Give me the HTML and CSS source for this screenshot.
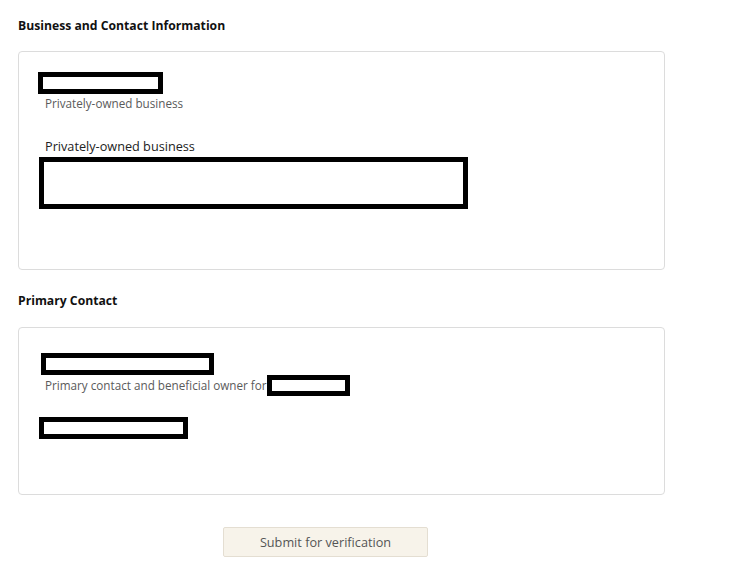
FILE: index.html
```html
<!DOCTYPE html>
<html>
<head>
<meta charset="utf-8">
<link rel="stylesheet" href="styles.css">
</head>
<body>
<div class="page">
  <h2 class="section-title">Business and Contact Information</h2>
  <div class="card card-business">
    <div class="redact redact-a"></div>
    <div class="sub-text">Privately-owned business</div>
    <div class="main-text">Privately-owned business</div>
    <div class="redact redact-b"></div>
  </div>

  <h2 class="section-title title-contact">Primary Contact</h2>
  <div class="card card-contact">
    <div class="redact redact-c"></div>
    <div class="owner-row">
      <span class="sub-text inline">Primary contact and beneficial owner for</span>
      <span class="redact redact-d"></span>
    </div>
    <div class="redact redact-e"></div>
  </div>

  <div class="actions">
    <button class="submit-btn" type="button">Submit for verification</button>
  </div>
</div>
</body>
</html>
```
FILE: styles.css
```css
html, body {
  margin: 0;
  padding: 0;
  background: #ffffff;
}

body {
  font-family: "Open Sans", "Noto Sans", "DejaVu Sans", sans-serif;
  color: #222;
}

.page {
  padding: 17px 18px 0 18px;
  width: 647px;
}

.section-title {
  margin: 0;
  font-size: 12.2px;
  line-height: 18px;
  font-weight: 700;
  color: #111;
}

.title-contact {
  margin-top: 22px;
}

.card {
  box-sizing: border-box;
  border: 1px solid #dcdcdc;
  border-radius: 4px;
  margin-top: 16px;
  padding-left: 19px;
  display: flex;
  flex-direction: column;
  align-items: flex-start;
}

.card-business {
  height: 219px;
  padding-top: 20px;
}

.card-contact {
  height: 168px;
  margin-top: 17px;
  padding-top: 25px;
}

.redact {
  box-sizing: border-box;
  border: 5px solid #000;
  background: #fff;
  display: block;
}

.redact-a {
  width: 125px;
  height: 22px;
}

.redact-b {
  width: 429px;
  height: 52px;
  margin-left: 1px;
}

.redact-c {
  width: 173px;
  height: 22px;
  margin-left: 3px;
}

.redact-d {
  width: 83px;
  height: 21px;
  margin-left: 0;
}

.redact-e {
  width: 149px;
  height: 22px;
  margin-left: 1px;
  margin-top: 21px;
}

.sub-text {
  font-size: 11.7px;
  line-height: 15px;
  color: #5a5a5a;
  margin-left: 7px;
  margin-top: 2px;
}

.sub-text.inline {
  margin: 0;
}

.main-text {
  font-size: 12.7px;
  line-height: 17px;
  color: #222;
  margin-left: 7px;
  margin-top: 27px;
  margin-bottom: 2px;
}

.owner-row {
  display: flex;
  align-items: center;
  margin-left: 7px;
}

.actions {
  margin-top: 32px;
  padding-left: 205px;
}

.submit-btn {
  box-sizing: border-box;
  width: 205px;
  height: 30px;
  background: #f7f3ea;
  border: 1px solid #e4ded2;
  border-radius: 2px;
  font-family: "Open Sans", "Noto Sans", sans-serif;
  font-size: 12.7px;
  color: #555;
  padding: 0;
  cursor: pointer;
}
```
